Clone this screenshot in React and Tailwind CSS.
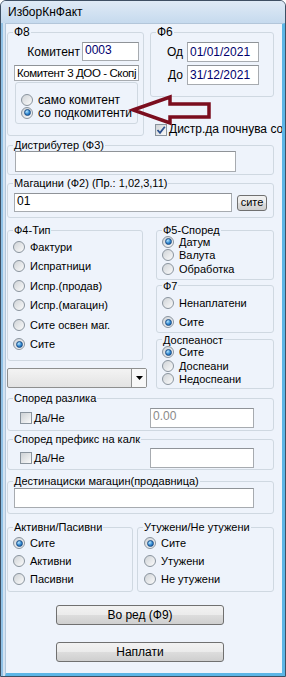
import React from 'react'

function Radio({ checked, label, className = '' }) {
  return (
    <div className={`flex items-center gap-[5px] whitespace-nowrap ${className}`}>
      <span className="w-[12px] h-[12px] shrink-0 rounded-full border border-[#8a949e] bg-[linear-gradient(135deg,#cfd3d7,#fbfbfb)] flex items-center justify-center">
        {checked && (
          <span className="w-[7px] h-[7px] rounded-full border border-[#1c4d86] bg-[radial-gradient(circle_at_35%_30%,#b6e6ff,#2e86d0_55%,#0f4f8f)]" />
        )}
      </span>
      <span>{label}</span>
    </div>
  )
}

function Check({ checked }) {
  return (
    <span className="w-[12px] h-[12px] shrink-0 border border-[#8a949e] bg-[linear-gradient(135deg,#cdd1d5,#fafafa)] flex items-center justify-center">
      {checked && (
        <svg width="10" height="10" viewBox="0 0 10 10">
          <path d="M1.5 5 L4 7.8 L8.8 1.8" fill="none" stroke="#2b4f8e" strokeWidth="1.8" />
        </svg>
      )}
    </span>
  )
}

function TextBox({ value = '', className = '' }) {
  return (
    <div className={`bg-white border border-[#a7abb0] border-t-[#8f9398] px-[2px] overflow-hidden whitespace-nowrap leading-[14px] ${className}`}>
      {value}
    </div>
  )
}

function Group({ title, className = '', big = false, children }) {
  return (
    <fieldset className={`border border-[#cfd8e1] rounded-[3px] min-w-0 ${className}`}>
      <legend className={`ml-[5px] px-[1px] leading-[12px] ${big ? 'text-[12px]' : 'text-[11px]'}`}>{title}</legend>
      {children}
    </fieldset>
  )
}

const btn = 'border border-[#707070] rounded-[3px] bg-[linear-gradient(#f2f2f2_0%,#ebebeb_50%,#dddddd_50%,#cfcfcf_100%)] flex items-center justify-center'

export default function App() {
  return (
    <div className="w-[286px] h-[677px] border border-[#3e4f63] rounded-t-[6px] bg-[#d3e2f1] flex flex-col overflow-hidden text-black font-['Liberation_Sans',Arial,sans-serif]">
      {/* title bar */}
      <div className="h-[22px] shrink-0 flex items-center pl-[7px] text-[12px] bg-[linear-gradient(#dfeaf6,#c6daee)]">
        ИзборКнФакт
      </div>

      <div className="flex flex-1 min-h-0">
        <div className="w-[4px] shrink-0 border-l-2 border-[#8fc1e6]" />
        <div className="relative flex-1 border-l border-t border-[#b3c6da] border-r-[3px] border-r-[#5cb6e6] border-b-[3px] border-b-[#5cb6e6] bg-[#eef3fb] overflow-hidden">
          <div className="flex flex-col pl-[1px] pt-[2px] text-[11px]">
            {/* Ф8 / Ф6 */}
            <div className="flex">
              <Group title="Ф8" big className="w-[137px] shrink-0">
                <div className="pl-[6px] pr-[4px] pt-[4px] pb-[2px] text-[12px]">
                  <div className="flex items-center justify-end gap-[2px]">
                    <span>Комитент</span>
                    <TextBox value="0003" className="w-[57px] h-[19px] text-[#00006e]" />
                  </div>
                  <TextBox value="Комитент 3 ДОО - Скопј" className="mt-[4px] h-[16px] leading-[14px] bg-[#fbfbfb] text-[11.5px] tracking-[-0.4px]" />
                  <div className="mt-[1px] mx-[1px] h-[42px] border border-[#cfd8e1] rounded-[3px] pt-[10px] pl-[5px]">
                    <Radio label="само комитент" className="h-[13px]" />
                    <Radio checked label="со подкомитенти" className="h-[13px]" />
                  </div>
                </div>
              </Group>

              <div className="ml-[6px] flex flex-col">
                <Group title="Ф6" big className="w-[124px]">
                  <div className="pt-[4px] pb-[11px] pr-[14px] text-[12px]">
                    <div className="flex items-center justify-end gap-[4px]">
                      <span>Од</span>
                      <TextBox value="01/01/2021" className="w-[72px] h-[20px] pt-[2px] text-[#00006e]" />
                    </div>
                    <div className="mt-[3px] flex items-center justify-end gap-[4px]">
                      <span>До</span>
                      <TextBox value="31/12/2021" className="w-[72px] h-[20px] pt-[2px] text-[#00006e]" />
                    </div>
                  </div>
                </Group>
                <div className="mt-[26px] ml-[5px] flex items-center gap-[2px] whitespace-nowrap text-[12px] leading-[13px]">
                  <Check checked />
                  <span>Дистр.да почнува со</span>
                </div>
              </div>
            </div>

            {/* Ф3 */}
            <Group title="Дистрибутер (Ф3)" className="mt-[3px] w-[267px]">
              <div className="pl-[7px] pb-[2px]">
                <TextBox className="w-[221px] h-[21px]" />
              </div>
            </Group>

            {/* Ф2 */}
            <Group title="Магацини (Ф2) (Пр.: 1,02,3,11)" className="mt-[2px] w-[267px]">
              <div className="pl-[6px] pt-[4px] pb-[5px] flex items-center gap-[5px]">
                <TextBox value="01" className="w-[218px] h-[19px] text-[12px]" />
                <div className={`${btn} w-[30px] h-[16px] text-[11px]`}>сите</div>
              </div>
            </Group>

            {/* Ф4 / Ф5 / Ф7 / Доспеаност */}
            <div className="mt-[6px] flex">
              <div className="w-[140px] shrink-0 flex flex-col">
                <Group title="Ф4-Тип" className="w-[136px]">
                  <div className="pt-[1px] pl-[5px] pb-[6px]">
                    <Radio label="Фактури" className="h-[19.5px]" />
                    <Radio label="Испратници" className="h-[19.5px]" />
                    <Radio label="Испр.(продав)" className="h-[19.5px]" />
                    <Radio label="Испр.(магацин)" className="h-[19.5px]" />
                    <Radio label="Сите освен маг." className="h-[19.5px]" />
                    <Radio checked label="Сите" className="h-[19.5px]" />
                  </div>
                </Group>
                <div className="mt-[7px] h-[20px] w-[140px] border border-[#8e8f8f] rounded-[2px] bg-[linear-gradient(#f3f3f3,#e3e3e3)] flex justify-end">
                  <div className="w-[15px] border-l border-[#8e8f8f] bg-[#f8f8f8] flex items-center justify-center">
                    <svg width="7" height="4" viewBox="0 0 7 4">
                      <path d="M0 0 H7 L3.5 4 Z" fill="#000" />
                    </svg>
                  </div>
                </div>
              </div>

              <div className="ml-[9px] w-[118px] flex flex-col">
                <Group title="Ф5-Според" className="w-[118px]">
                  <div className="-mt-[1px] pl-[5px] pb-[3px]">
                    <Radio checked label="Датум" className="h-[13.5px]" />
                    <Radio label="Валута" className="h-[13.5px]" />
                    <Radio label="Обработка" className="h-[13.5px]" />
                  </div>
                </Group>
                <Group title="Ф7" className="w-[118px]">
                  <div className="pt-[2px] pl-[5px]">
                    <Radio label="Ненаплатени" className="h-[19px]" />
                    <Radio checked label="Сите" className="h-[19px]" />
                  </div>
                </Group>
                <Group title="Доспеаност" className="mt-[1px] w-[118px]">
                  <div className="pl-[5px] pb-[2px]">
                    <Radio checked label="Сите" className="h-[13.5px]" />
                    <Radio label="Доспеани" className="h-[13.5px]" />
                    <Radio label="Недоспеани" className="h-[13.5px]" />
                  </div>
                </Group>
              </div>
            </div>

            {/* Според разлика */}
            <Group title="Според разлика" className="mt-[3px] w-[267px]">
              <div className="pt-[4px] pb-[2px] pl-[12px] pr-[19px] flex items-center">
                <Check />
                <span className="ml-[2px]">Да/Не</span>
                <TextBox value="0.00" className="ml-auto w-[104px] h-[20px] text-[12px] text-[#8a8a8a]" />
              </div>
            </Group>

            {/* Според префикс */}
            <Group title="Според префикс на калк" className="mt-[2px] w-[267px]">
              <div className="pt-[3px] pb-[1px] pl-[12px] pr-[19px] flex items-center">
                <Check />
                <span className="ml-[2px]">Да/Не</span>
                <TextBox className="ml-auto w-[104px] h-[20px]" />
              </div>
            </Group>

            {/* Дестинациски */}
            <Group title="Дестинациски магацин(продавница)" className="mt-[5px] w-[267px]">
              <div className="pt-[1px] pb-[5px] pl-[6px]">
                <TextBox className="w-[240px] h-[20px]" />
              </div>
            </Group>

            {/* Активни / Утужени */}
            <div className="mt-[7px] flex gap-[4px]">
              <Group title="Активни/Пасивни" className="w-[126px]">
                <div className="pt-[1px] pb-[3px] pl-[5px]">
                  <Radio checked label="Сите" className="h-[18px]" />
                  <Radio label="Активни" className="h-[18px]" />
                  <Radio label="Пасивни" className="h-[18px]" />
                </div>
              </Group>
              <Group title="Утужени/Не утужени" className="w-[137px]">
                <div className="pt-[1px] pb-[3px] pl-[6px]">
                  <Radio checked label="Сите" className="h-[18px]" />
                  <Radio label="Утужени" className="h-[18px]" />
                  <Radio label="Не утужени" className="h-[18px]" />
                </div>
              </Group>
            </div>

            <div className={`${btn} mt-[13px] ml-[49px] w-[168px] h-[20px] text-[12px]`}>Во ред (Ф9)</div>
            <div className={`${btn} mt-[17px] ml-[49px] w-[168px] h-[20px] text-[12px]`}>Наплати</div>
          </div>

          {/* red arrow pointing at the radio */}
          <svg className="absolute left-[122px] top-[68px]" width="90" height="36" viewBox="0 0 90 36">
            <path d="M5 18 L42 5 L42 12 L81 12 L81 25 L42 25 L42 31 Z" fill="none" stroke="#7b0d1e" strokeWidth="3.5" strokeLinejoin="miter" />
          </svg>
        </div>
      </div>
    </div>
  )
}
